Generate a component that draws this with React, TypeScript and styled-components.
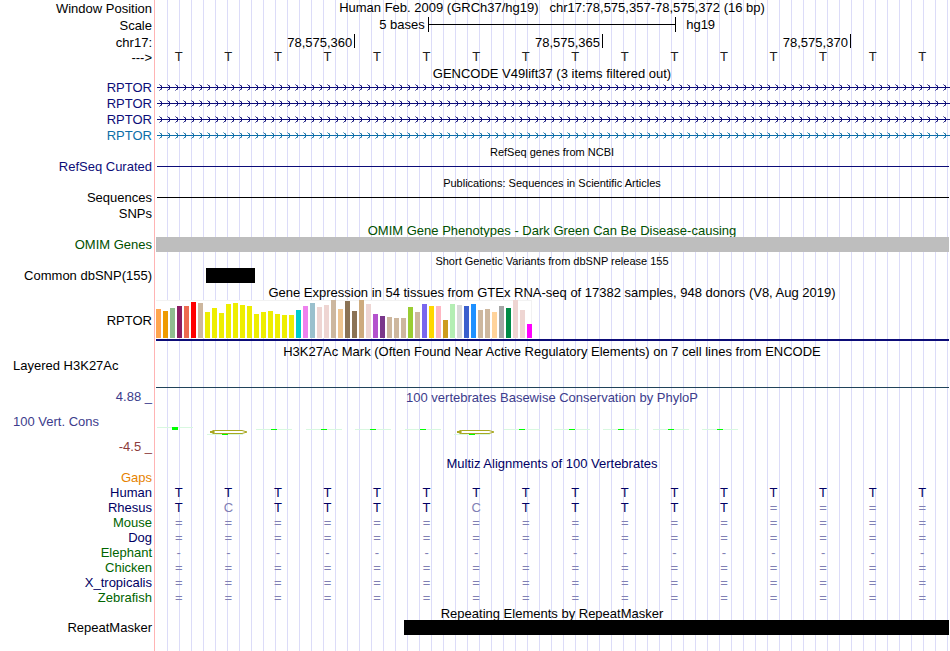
import React from "react";
import styled, { createGlobalStyle } from "styled-components";

const NAVY = "#0c0c78";
const SPECIES_NAVY = "#000064";
const SPECIES_GREEN = "#006400";
const PHYLO_BLUE = "#3c3c8c";

const GlobalStyle = createGlobalStyle`
  body {
    margin: 0;
    background: #ffffff;
    color: #000000;
    font-family: "Liberation Sans", Arial, sans-serif;
    font-size: 13px;
    line-height: 18px;
  }
`;

const Browser = styled.main`
  overflow: hidden;
  padding-bottom: 16px;
  background-image: linear-gradient(to right, #ffb4b4 1px, transparent 1px),
    repeating-linear-gradient(to right, #dcdcf8 0 1px, transparent 1px 12px);
  background-position: 154px 0, 167px 0;
  background-repeat: no-repeat;
`;

const Row = styled.div<{ $height: number }>`
  display: grid;
  grid-template-columns: 152px minmax(0, 1fr);
  column-gap: 2px;
  height: ${(p) => p.$height}px;
`;

const Label = styled.div<{ $color?: string; $left?: boolean; $middle?: boolean }>`
  color: ${(p) => p.$color ?? "#000000"};
  text-align: ${(p) => (p.$left ? "left" : "right")};
  padding-left: 13px;
  align-self: ${(p) => (p.$middle ? "center" : "stretch")};
  white-space: pre;
`;

const Title = styled.h2<{ $color?: string; $small?: boolean; $line?: number }>`
  grid-column: 2;
  margin: 0;
  font-weight: 400;
  font-size: ${(p) => (p.$small ? 11 : 13)}px;
  line-height: ${(p) => p.$line ?? 18}px;
  color: ${(p) => p.$color ?? "#000000"};
  text-align: center;
  white-space: pre;
`;

const ScaleRow = styled.div`
  display: grid;
  grid-template-columns: 1fr 31.2% 1fr;
  line-height: 16px;
`;

const ScaleText = styled.span<{ $end?: boolean }>`
  text-align: ${(p) => (p.$end ? "right" : "left")};
  padding: ${(p) => (p.$end ? "0 3px 0 0" : "0 0 0 10px")};
`;

const ScaleBar = styled.div`
  height: 15px;
  border: solid #000000;
  border-width: 0 1px;
  background: linear-gradient(#000000, #000000) 0 7px / 100% 1px no-repeat;
`;

const Coordinates = styled.div`
  display: grid;
  grid-template-columns: repeat(16, minmax(0, 1fr));
  padding-left: 3px;
`;

const Coordinate = styled.span<{ $from: number; $to: number }>`
  grid-column: ${(p) => p.$from} / ${(p) => p.$to};
  height: 14px;
  padding-right: 2px;
  border-right: 1px solid #000000;
  text-align: right;
`;

const BaseGrid = styled.div<{ $color?: string; $line?: number }>`
  display: grid;
  grid-template-columns: repeat(16, minmax(0, 1fr));
  padding-right: 3px;
  color: ${(p) => p.$color ?? "#000000"};
  line-height: ${(p) => p.$line ?? 16}px;
  text-align: center;
`;

const Base = styled.span<{ $faint?: boolean }>`
  color: ${(p) => (p.$faint ? "#8080b4" : "inherit")};
`;

const GeneSvg = styled.svg`
  display: block;
  width: 100%;
  height: 16px;
`;

const Rule = styled.div<{ $color: string }>`
  height: 1px;
  margin: 8px 1px 0 3px;
  background: ${(p) => p.$color};
`;

const Block = styled.div<{ $color: string; $start: string; $width: string }>`
  z-index: 1;
  height: 15px;
  margin: 1px 1px 0 ${(p) => p.$start};
  width: ${(p) => p.$width};
  background: ${(p) => p.$color};
`;

const Expression = styled.div`
  z-index: 1;
  margin: 0 1px 1px 2px;
  border-bottom: 2px solid ${NAVY};
`;

const BarChart = styled.div`
  display: flex;
  align-items: flex-end;
  gap: 2px;
  width: max-content;
  height: 38px;
  margin-top: 1px;
  background: #ffffff;
  box-shadow: inset 0 1px #f2f2f2, inset -1px 0 #f2f2f2;
`;

const Bar = styled.i<{ $height: number; $color: string }>`
  width: 5px;
  height: ${(p) => p.$height}px;
  background: ${(p) => p.$color};
`;

const Signal = styled.div`
  margin: 0 1px 0 2px;
  border-bottom: 1px solid #20435a;
`;

const ScaleLabels = styled.div`
  display: flex;
  flex-direction: column;
  gap: 7px;
`;

const PhyloCell = styled.svg`
  display: block;
  width: 49px;
  height: 20px;
`;

const PhyloArea = styled.div`
  display: flex;
  flex-direction: column;
  gap: 11px;
`;

const Genes = [
  { id: "a", color: NAVY },
  { id: "b", color: NAVY },
  { id: "c", color: NAVY },
  { id: "d", color: "#0c6ea8" },
];

const TAN = "#cdb79e";
const YELLOW = "#eeee00";
const PINK = "#eed5d2";

const tissues: [number, string][] = [
  [29, "#ffa54f"], [27, "#ee9a00"], [30, "#8fbc8f"], [32, "#8b1c62"], [32, "#ee6a50"],
  [36, "#ff0000"], [35, TAN], [26, YELLOW], [30, YELLOW], [25, YELLOW], [34, YELLOW],
  [35, YELLOW], [33, YELLOW], [32, YELLOW], [24, YELLOW], [26, YELLOW], [27, YELLOW],
  [24, YELLOW], [23, YELLOW], [23, YELLOW], [28, "#00cdcd"], [32, "#ee82ee"],
  [35, "#9ac0cd"], [31, PINK], [33, PINK], [38, TAN], [29, "#eec591"], [37, "#8b7355"],
  [27, "#8b7355"], [38, "#cdaa7d"], [34, PINK], [24, "#b452cd"], [22, "#7a378b"],
  [21, TAN], [20, TAN], [20, TAN], [31, "#9acd32"], [26, TAN], [34, "#7a67ee"],
  [32, "#ffd700"], [32, "#ffb6c1"], [18, "#cd9b1d"], [34, "#b4eeb4"], [33, "#d9d9d9"],
  [32, "#3a5fcd"], [34, "#1e90ff"], [28, TAN], [29, TAN], [26, "#ffd39b"],
  [32, "#a6a6a6"], [30, "#008b45"], [38, PINK], [28, PINK], [14, "#ff00ff"],
];

const species = [
  { name: "Human", color: SPECIES_NAVY, bases: "TTTTTTTTTTTTTTTT" },
  { name: "Rhesus", color: SPECIES_NAVY, bases: "TCTTTTCTTTTT====" },
  { name: "Mouse", color: SPECIES_GREEN, bases: "================" },
  { name: "Dog", color: SPECIES_NAVY, bases: "================" },
  { name: "Elephant", color: SPECIES_GREEN, bases: "----------------" },
  { name: "Chicken", color: SPECIES_GREEN, bases: "================" },
  { name: "X_tropicalis", color: SPECIES_NAVY, bases: "================" },
  { name: "Zebrafish", color: SPECIES_GREEN, bases: "================" },
];

function Sequence({ bases, color, line }: { bases: string; color?: string; line?: number }) {
  return (
    <BaseGrid $color={color} $line={line}>
      {bases.split("").map((base, i) => (
        <Base key={i} $faint={base !== "T"}>{base}</Base>
      ))}
    </BaseGrid>
  );
}

function GeneTrack({ id, color }: { id: string; color: string }) {
  return (
    <GeneSvg aria-hidden="true">
      <defs>
        <pattern id={`intron-${id}`} x="5" y="0" width="8" height="16" patternUnits="userSpaceOnUse">
          <g fill={color}>
            <path d="M2 7h1v1h-1zM2 9h1v1h-1z" />
            <path d="M1 6h1v1h-1zM1 10h1v1h-1z" fillOpacity="0.9" />
            <path d="M0 5h1v1h-1zM0 11h1v1h-1zM2 6h1v1h-1zM2 10h1v1h-1z" fillOpacity="0.5" />
          </g>
        </pattern>
      </defs>
      <rect x="5" y="0" width="100%" height="16" fill={`url(#intron-${id})`} />
      <rect x="3" y="8" width="100%" height="1" fill={color} />
    </GeneSvg>
  );
}

function Conservation({ index }: { index: number }) {
  const substituted = index === 1 || index === 6;
  const y = index === 0 ? 8 : substituted ? 15 : 10;
  return (
    <PhyloCell aria-hidden="true">
      <rect x="3" y={y} width="36" height="1" fill="#d8f8e0" />
      {substituted && (
        <g fill="none" stroke="#a8a820">
          <path d="M11 11.5H38L43 13L38 14.5H11L6 13Z" fill="#ffffff" />
          <path d="M6 13L10 11.5V14.5Z" fill="#a8a820" />
        </g>
      )}
      <rect x="18" y={y} width="6" height={index === 0 ? 3 : 1} fill="#00ff00" />
    </PhyloCell>
  );
}

export default function App() {
  return (
    <>
      <GlobalStyle />
      <Browser>
        <Row $height={17}>
          <Label>Window Position</Label>
          <Title $line={16}>{"Human Feb. 2009 (GRCh37/hg19)   chr17:78,575,357-78,575,372 (16 bp)"}</Title>
        </Row>
        <Row $height={17}>
          <Label>Scale</Label>
          <ScaleRow>
            <ScaleText $end>5 bases</ScaleText>
            <ScaleBar />
            <ScaleText>hg19</ScaleText>
          </ScaleRow>
        </Row>
        <Row $height={15}>
          <Label>chr17:</Label>
          <Coordinates>
            <Coordinate $from={1} $to={5}>78,575,360</Coordinate>
            <Coordinate $from={5} $to={10}>78,575,365</Coordinate>
            <Coordinate $from={10} $to={15}>78,575,370</Coordinate>
          </Coordinates>
        </Row>
        <Row $height={16}>
          <Label>{"--->"}</Label>
          <Sequence bases="TTTTTTTTTTTTTTTT" color="#202020" line={16} />
        </Row>

        <Row $height={14}>
          <Title>GENCODE V49lift37 (3 items filtered out)</Title>
        </Row>
        {Genes.map((gene) => (
          <Row key={gene.id} $height={16}>
            <Label $color={gene.color}>RPTOR</Label>
            <GeneTrack {...gene} />
          </Row>
        ))}

        <Row $height={15}>
          <Title $small>RefSeq genes from NCBI</Title>
        </Row>
        <Row $height={16}>
          <Label $color={NAVY}>RefSeq Curated</Label>
          <Rule $color={NAVY} />
        </Row>

        <Row $height={15}>
          <Title $small>Publications: Sequences in Scientific Articles</Title>
        </Row>
        <Row $height={16}>
          <Label>Sequences</Label>
          <Rule $color="#000000" />
        </Row>
        <Row $height={16}>
          <Label>SNPs</Label>
        </Row>

        <Row $height={15}>
          <Title $color="#005000" $line={20}>OMIM Gene Phenotypes - Dark Green Can Be Disease-causing</Title>
        </Row>
        <Row $height={16}>
          <Label $color="#005000">OMIM Genes</Label>
          <Block $color="#bebebe" $start="2px" $width="auto" />
        </Row>

        <Row $height={15}>
          <Title $small>Short Genetic Variants from dbSNP release 155</Title>
        </Row>
        <Row $height={16}>
          <Label>Common dbSNP(155)</Label>
          <Block $color="#000000" $start="6.5%" $width="6.2%" />
        </Row>

        <Row $height={16}>
          <Title $line={20}>Gene Expression in 54 tissues from GTEx RNA-seq of 17382 samples, 948 donors (V8, Aug 2019)</Title>
        </Row>
        <Row $height={43}>
          <Label $middle>RPTOR</Label>
          <Expression>
            <BarChart>
              {tissues.map(([height, color], i) => (
                <Bar key={i} $height={height} $color={color} />
              ))}
            </BarChart>
          </Expression>
        </Row>

        <Row $height={15}>
          <Title $line={20}>H3K27Ac Mark (Often Found Near Active Regulatory Elements) on 7 cell lines from ENCODE</Title>
        </Row>
        <Row $height={31}>
          <Label $left>Layered H3K27Ac</Label>
          <Signal />
        </Row>

        <Row $height={66}>
          <ScaleLabels>
            <Label $color={PHYLO_BLUE}>4.88 _</Label>
            <Label $color={PHYLO_BLUE} $left>100 Vert. Cons</Label>
            <Label $color="#8c3c3c">-4.5 _</Label>
          </ScaleLabels>
          <PhyloArea>
            <Title $color={PHYLO_BLUE} $line={20}>100 vertebrates Basewise Conservation by PhyloP</Title>
            <BaseGrid>
              {Array.from({ length: 12 }, (_, i) => (
                <Conservation key={i} index={i} />
              ))}
            </BaseGrid>
          </PhyloArea>
        </Row>

        <Row $height={15}>
          <Title $color={SPECIES_NAVY} $line={20}>Multiz Alignments of 100 Vertebrates</Title>
        </Row>
        <Row $height={15}>
          <Label $color="#e68200">Gaps</Label>
        </Row>
        {species.map(({ name, color, bases }) => (
          <Row key={name} $height={15}>
            <Label $color={color}>{name}</Label>
            <Sequence bases={bases} color={SPECIES_NAVY} line={18} />
          </Row>
        ))}

        <Row $height={15}>
          <Title $line={20}>Repeating Elements by RepeatMasker</Title>
        </Row>
        <Row $height={16}>
          <Label>RepeatMasker</Label>
          <Block $color="#000000" $start="31.4%" $width="auto" />
        </Row>
      </Browser>
    </>
  );
}
